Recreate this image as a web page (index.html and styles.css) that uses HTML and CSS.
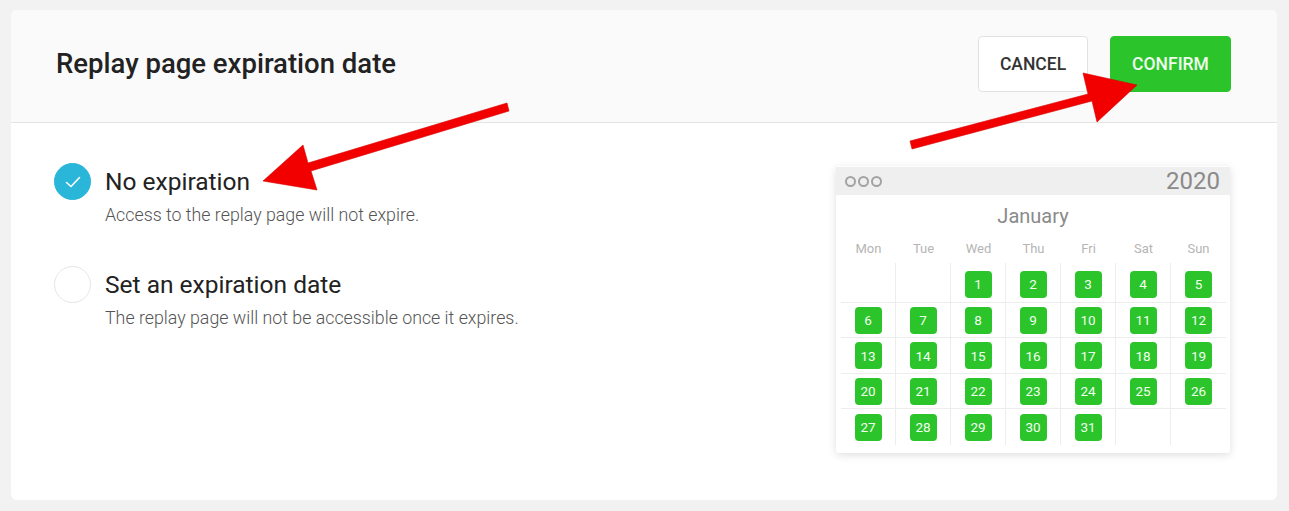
FILE: index.html
```html
<!DOCTYPE html>
<html lang="en">
<head>
    <meta charset="UTF-8">
    <title>Replay page expiration date</title>
    <link rel="stylesheet" href="styles.css">
</head>
<body>
    <div class="card">
        <div class="card-head">
            <h1>Replay page expiration date</h1>
            <div class="actions">
                <button class="btn btn-cancel">CANCEL</button>
                <button class="btn btn-confirm">CONFIRM</button>
            </div>
        </div>

        <div class="card-body">
            <div class="options">
                <div class="option">
                    <span class="radio checked">
                        <svg width="22" height="22" viewBox="0 0 22 22"><path d="M4.5 11.5 L9 15.5 L17.5 6.5" fill="none" stroke="#fff" stroke-width="1.6" stroke-linecap="round" stroke-linejoin="round"/></svg>
                    </span>
                    <div class="option-text">
                        <div class="option-title">No expiration</div>
                        <div class="option-desc">Access to the replay page will not expire.</div>
                    </div>
                </div>
                <div class="option">
                    <span class="radio"></span>
                    <div class="option-text">
                        <div class="option-title">Set an expiration date</div>
                        <div class="option-desc">The replay page will not be accessible once it expires.</div>
                    </div>
                </div>
            </div>

            <div class="calendar">
                <div class="cal-top">
                    <div class="dots"><i></i><i></i><i></i></div>
                    <span class="year">2020</span>
                </div>
                <div class="month">January</div>
                <div class="weekdays">
                    <span>Mon</span><span>Tue</span><span>Wed</span><span>Thu</span><span>Fri</span><span>Sat</span><span>Sun</span>
                </div>
                <div class="days">
                    <div class="day"></div><div class="day"></div>
                    <div class="day"><b>1</b></div><div class="day"><b>2</b></div><div class="day"><b>3</b></div><div class="day"><b>4</b></div><div class="day"><b>5</b></div>
                    <div class="day"><b>6</b></div><div class="day"><b>7</b></div><div class="day"><b>8</b></div><div class="day"><b>9</b></div><div class="day"><b>10</b></div><div class="day"><b>11</b></div><div class="day"><b>12</b></div>
                    <div class="day"><b>13</b></div><div class="day"><b>14</b></div><div class="day"><b>15</b></div><div class="day"><b>16</b></div><div class="day"><b>17</b></div><div class="day"><b>18</b></div><div class="day"><b>19</b></div>
                    <div class="day"><b>20</b></div><div class="day"><b>21</b></div><div class="day"><b>22</b></div><div class="day"><b>23</b></div><div class="day"><b>24</b></div><div class="day"><b>25</b></div><div class="day"><b>26</b></div>
                    <div class="day"><b>27</b></div><div class="day"><b>28</b></div><div class="day"><b>29</b></div><div class="day"><b>30</b></div><div class="day"><b>31</b></div><div class="day"></div><div class="day"></div>
                </div>
            </div>
        </div>
    </div>

    <!-- annotation arrows drawn over the screenshot -->
    <svg class="arrows" width="1289" height="511" viewBox="0 0 1289 511">
        <polygon points="507,103 308,163 303,145 263,181 317,190 311,171 509,111" />
        <polygon points="910,141 1088,94 1083,73 1137,85 1097,122 1092,101 912,149" />
    </svg>
</body>
</html>
```

FILE: styles.css
```css
* {
    box-sizing: border-box;
}

body {
    margin: 0;
    padding: 10px 12px 11px 11px;
    background: #f2f2f2;
    font-family: Roboto, "Liberation Sans", sans-serif;
    color: #222;
}

.card {
    background: #fff;
    border-radius: 6px;
    height: 490px;
    overflow: hidden;
}

.card-head {
    height: 113px;
    background: #fafafa;
    border-bottom: 1px solid #e3e3e3;
    display: flex;
    justify-content: space-between;
    padding: 26px 46px 0 45px;
}

h1 {
    margin: 0;
    font-size: 27.5px;
    font-weight: 500;
    line-height: 56px;
    color: #222;
}

.actions {
    display: flex;
    gap: 22px;
}

.btn {
    height: 56px;
    border-radius: 4px;
    font-family: Roboto, "Liberation Sans", sans-serif;
    font-size: 17.5px;
    font-weight: 500;
    padding: 0;
    cursor: pointer;
}

.btn-cancel {
    width: 110px;
    background: #fff;
    border: 1px solid #e2e2e2;
    color: #333;
}

.btn-confirm {
    width: 121px;
    background: #2bc42b;
    border: 1px solid #2bc42b;
    color: #effcee;
}

.card-body {
    display: flex;
    justify-content: space-between;
    padding: 40px 47px 0 43px;
}

.options {
    display: flex;
    flex-direction: column;
    gap: 39px;
}

.option {
    display: flex;
    gap: 14px;
}

.radio {
    width: 37px;
    height: 37px;
    border-radius: 50%;
    border: 1px solid #e6e6e6;
    flex-shrink: 0;
    display: flex;
    align-items: center;
    justify-content: center;
}

.radio.checked {
    background: #29b6d9;
    border-color: #29b6d9;
}

.option-title {
    font-size: 24.5px;
    line-height: 37px;
    color: #222;
}

.option-desc {
    margin-top: 3px;
    font-size: 17.8px;
    font-weight: 300;
    line-height: 24px;
    color: #555;
}

/* calendar illustration */
.calendar {
    width: 394px;
    height: 287px;
    margin-top: 3px;
    background: #fff;
    border-radius: 3px;
    box-shadow: 0 2px 8px rgba(0, 0, 0, 0.13);
    padding-top: 1px;
}

.cal-top {
    height: 28px;
    background: #efefef;
    display: flex;
    justify-content: space-between;
    align-items: center;
    padding: 0 10px 0 9px;
}

.dots {
    display: flex;
    gap: 2px;
}

.dots i {
    width: 11px;
    height: 11px;
    border-radius: 50%;
    border: 2px solid #a3a3a3;
}

.year {
    font-size: 24px;
    line-height: 28px;
    color: #8a8a8a;
}

.month {
    height: 40px;
    line-height: 42px;
    text-align: center;
    font-size: 20px;
    color: #8a8a8a;
}

.weekdays,
.days {
    display: grid;
    grid-template-columns: repeat(7, 55px);
    margin-left: 5px;
}

.weekdays span {
    height: 28px;
    line-height: 28px;
    text-align: center;
    font-size: 13px;
    color: #b5b5b5;
}

.days {
    grid-template-rows: 39px 35px 36px 35px 37px;
}

.day {
    display: flex;
    align-items: center;
    justify-content: center;
    border-right: 1px solid #ededed;
}

.day:nth-child(-n+7) {
    padding-top: 3px;
}

.day:nth-child(7n) {
    border-right: none;
}

.day:nth-child(n+8) {
    border-top: 1px solid #ededed;
}

.day b {
    width: 27px;
    height: 27px;
    border-radius: 4px;
    background: #2bc42b;
    color: #f2fff0;
    font-size: 13.5px;
    font-weight: 400;
    display: flex;
    align-items: center;
    justify-content: center;
}

.arrows {
    position: absolute;
    left: 0;
    top: 0;
    pointer-events: none;
}

.arrows polygon {
    fill: #f20000;
    stroke: #d80000;
    stroke-width: 0.6;
    stroke-linejoin: round;
}
```
